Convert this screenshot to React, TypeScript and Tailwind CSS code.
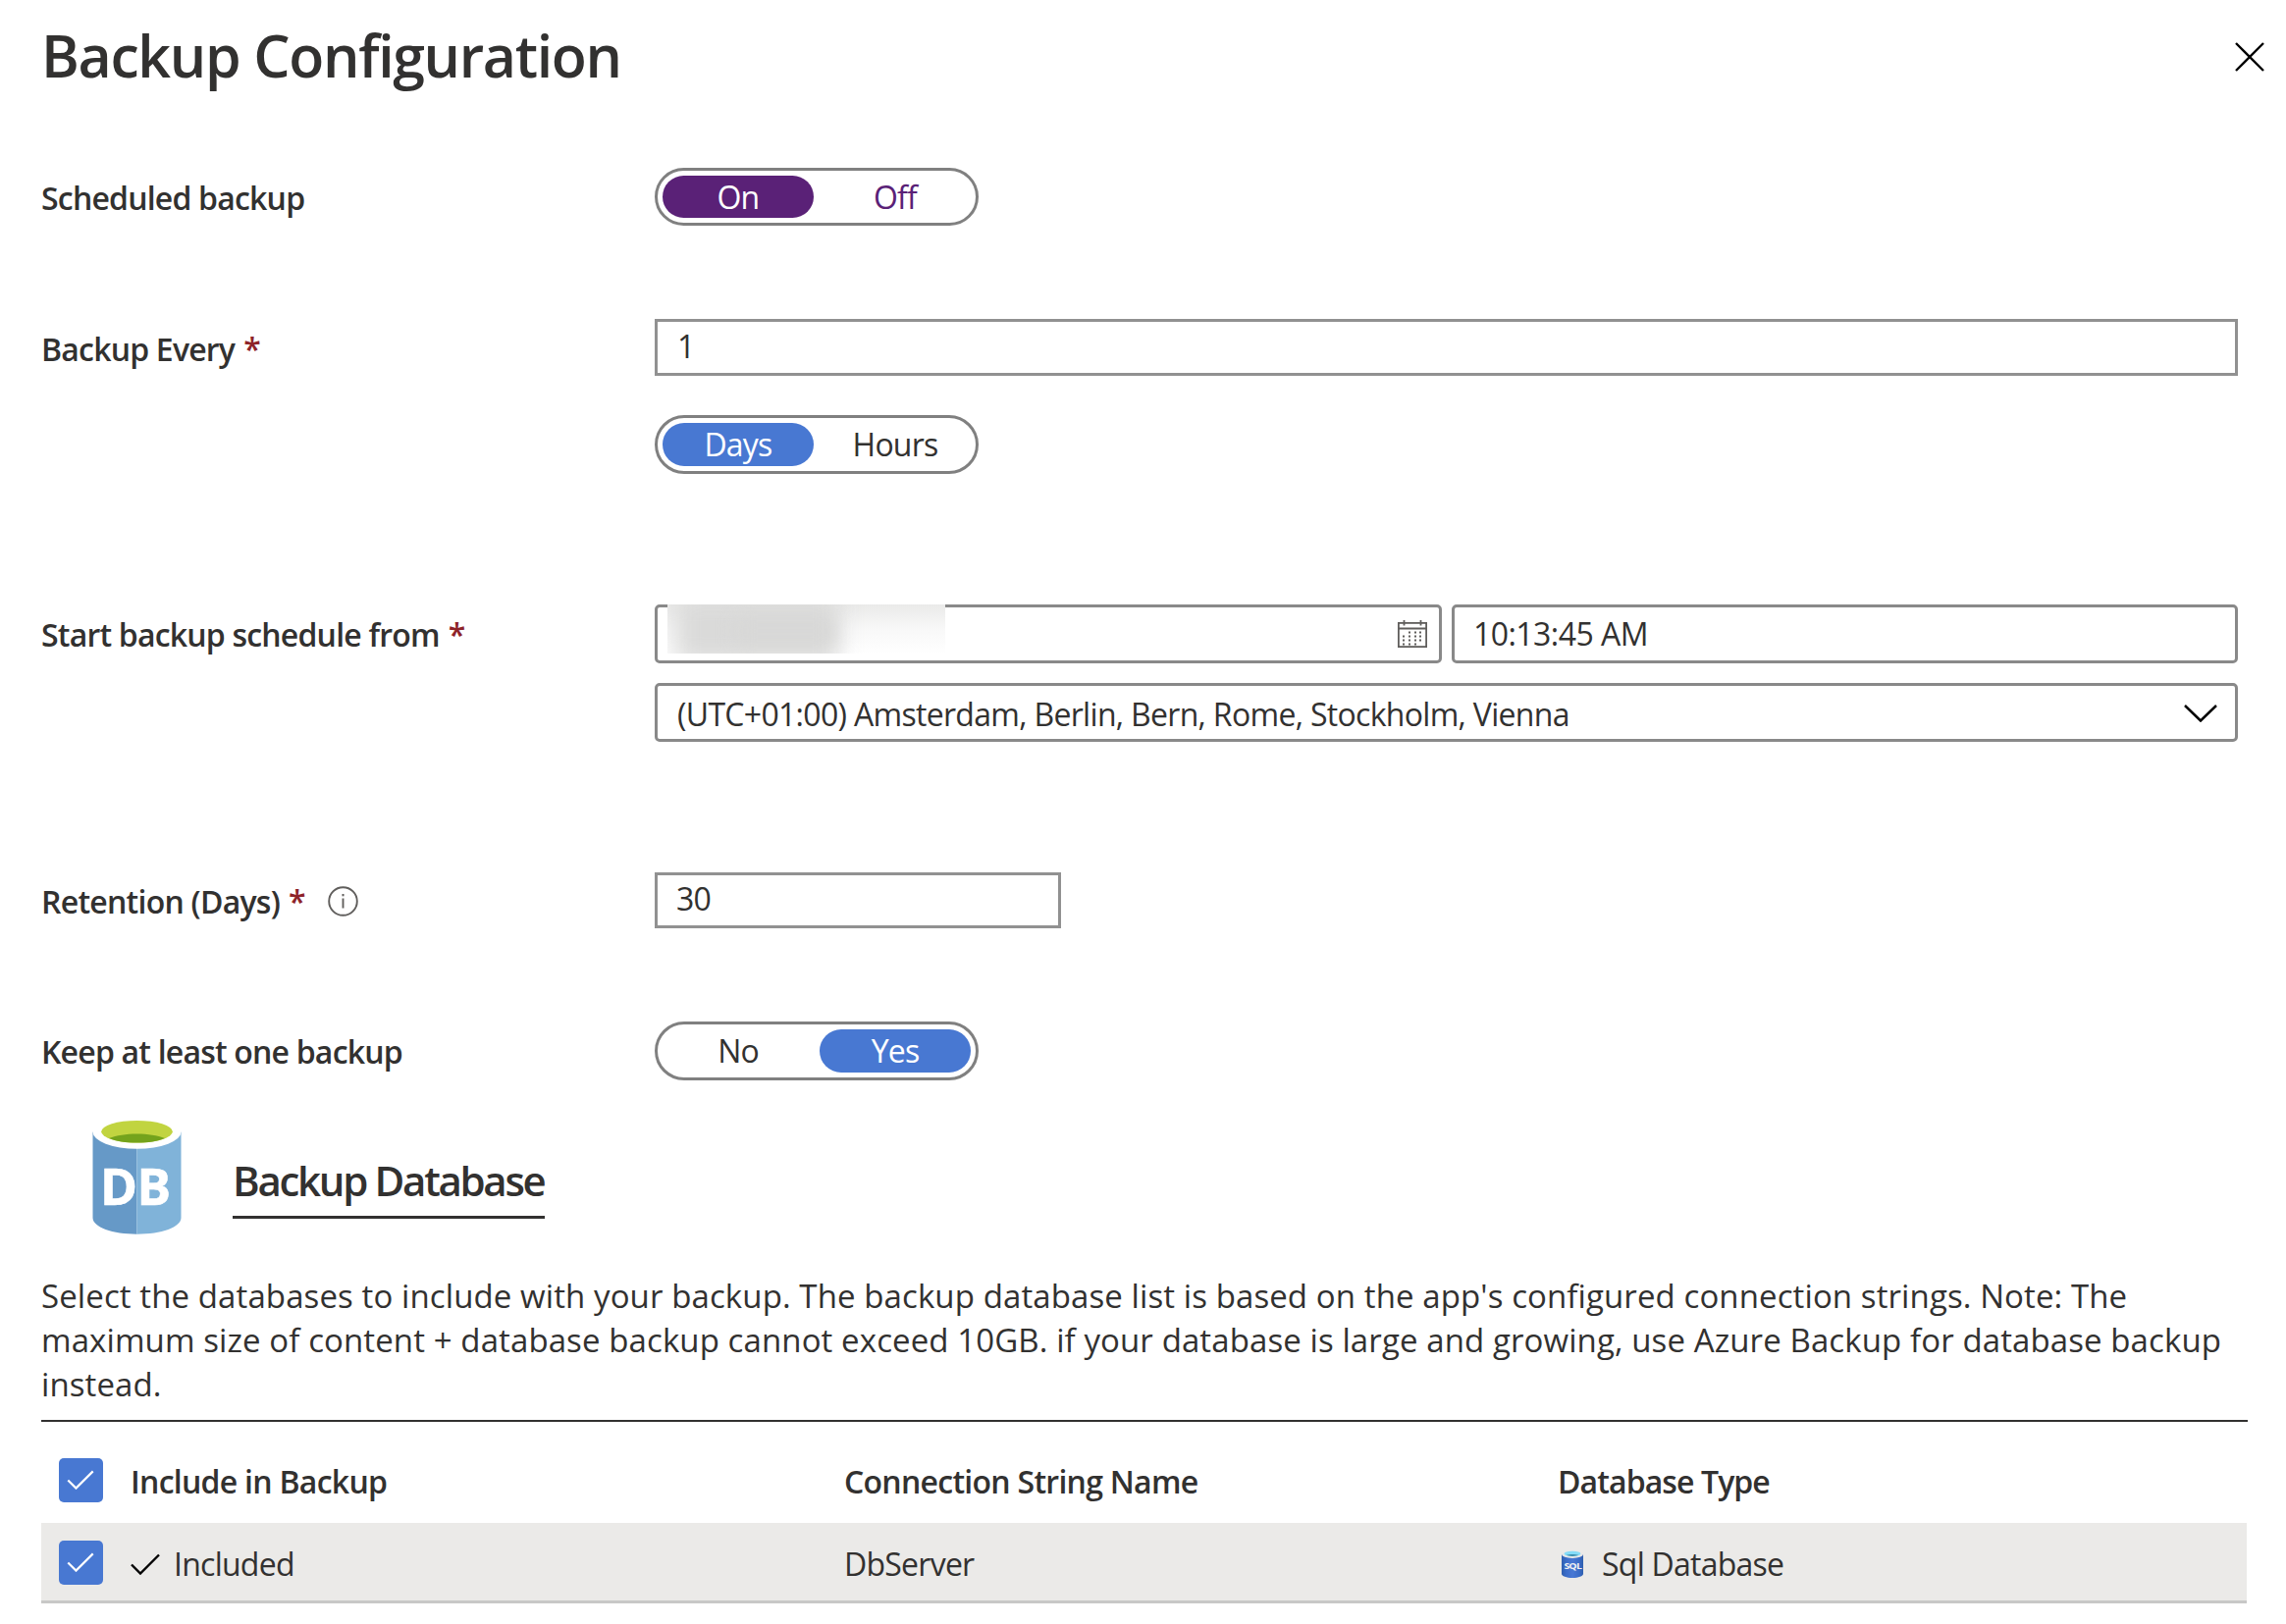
import type { ReactNode } from "react";

function Toggle({
  left,
  right,
  active,
  tone = "blue",
  size = "h-[60px]",
}: {
  left: string;
  right: string;
  active: "left" | "right";
  tone?: "blue" | "purple";
  size?: string;
}) {
  const on = tone === "purple" ? "bg-[#5a2177] text-white" : "bg-[#4878d2] text-white";
  const off = tone === "purple" ? "text-[#5a2177]" : "text-[#323130]";
  const cell = "flex h-full w-[154px] items-center justify-center rounded-[22px] tracking-[-0.8px]";
  return (
    <div className={`flex w-[330px] gap-[6px] rounded-[30px] border-[3px] border-[#808080] p-[5px] ${size}`}>
      <div className={`${cell} ${active === "left" ? on : off}`}>{left}</div>
      <div className={`${cell} ${active === "right" ? on : off}`}>{right}</div>
    </div>
  );
}

function Label({ children, required, leading }: { children: ReactNode; required?: boolean; leading: string }) {
  return (
    <div className={`w-[625px] shrink-0 font-semibold whitespace-pre tracking-[-0.8px] ${leading}`}>
      {children}
      {required && <span className="ml-[9px] text-[#8e2329]">*</span>}
    </div>
  );
}

function Tick({ className }: { className: string }) {
  return (
    <svg viewBox="0 0 30 22" className={className} fill="none" stroke="currentColor">
      <path d="M1 11.5 L10 20.5 L29 1.5" strokeWidth="2.4" />
    </svg>
  );
}

function Checkbox() {
  return (
    <div className="flex h-[45px] w-[45px] shrink-0 items-center justify-center rounded-[5px] bg-[#4878d2] pr-[2px] pb-[2px] text-white">
      <Tick className="h-[20px] w-[28px]" />
    </div>
  );
}

function CloseIcon() {
  return (
    <svg viewBox="0 0 30 30" className="mt-[43px] h-[30px] w-[30px]" stroke="#000" strokeWidth="2.4" fill="none">
      <path d="M1 1 L29 29 M29 1 L1 29" />
    </svg>
  );
}

function InfoIcon() {
  return (
    <svg viewBox="0 0 31 31" className="h-[31px] w-[31px]" fill="none" stroke="#605e5c">
      <circle cx="15.5" cy="15.5" r="14.3" strokeWidth="1.9" />
      <path d="M15.5 12.5 V22.5" strokeWidth="1.9" />
      <path d="M15.5 8 V10.3" strokeWidth="2" />
    </svg>
  );
}

const calendarDots = [
  [11, 12], [17, 12], [22, 12],
  [5, 16], [11, 16], [17, 16], [22, 16],
  [5, 20], [11, 20], [17, 20], [22, 20],
  [5, 24], [11, 24], [17, 24],
];

function CalendarIcon() {
  return (
    <svg viewBox="0 0 30 28" className="h-[28px] w-[30px]" fill="none" stroke="#605e5c" strokeWidth="1.8">
      <rect x="0.9" y="2.9" width="28.2" height="24.2" />
      <path d="M0 8.5 H30 M6.5 0 V5.5 M23.5 0 V5.5" />
      {calendarDots.map(([x, y]) => (
        <rect key={`${x}-${y}`} x={x} y={y - 0.5} width="2" height="2" fill="#605e5c" stroke="none" />
      ))}
    </svg>
  );
}

function ChevronIcon() {
  return (
    <svg viewBox="0 0 34 18" className="mt-[1px] h-[18px] w-[34px]" fill="none" stroke="#000" strokeWidth="2.5">
      <path d="M1 1 L17 16.5 L33 1" />
    </svg>
  );
}

function DatabaseIcon() {
  return (
    <svg viewBox="0 0 91 116" className="ml-[52px] h-[116px] w-[91px] shrink-0">
      <path d="M0.5 11.5 V99 C0.5 108.5 20.5 115.7 45.5 115.7 V11.5 Z" fill="#6699c7" />
      <path d="M45.5 11.5 V115.7 C70.5 115.7 90.5 108.5 90.5 99 V11.5 Z" fill="#80b3d9" />
      <ellipse cx="45.5" cy="11.5" rx="45" ry="17.2" fill="#fff" />
      <ellipse cx="45.5" cy="11.3" rx="36.3" ry="11.3" fill="#c1d440" />
      <path d="M17 18 C25 15 34 13.5 45.5 13.5 C57 13.5 66 15 74 18 C67 21 57 22.6 45.5 22.6 C34 22.6 24 21 17 18 Z" fill="#74a31c" />
      <text x="8" y="85.6" fontSize="51.5" fontWeight="700" fill="#fff" stroke="#fff" strokeWidth="0.6">
        <tspan>D</tspan>
        <tspan x="45.6">B</tspan>
      </text>
    </svg>
  );
}

function SqlIcon() {
  return (
    <svg viewBox="0 0 22 28" className="h-[28px] w-[22px]">
      <defs>
        <linearGradient id="sql-body" x1="0" x2="1" y1="0" y2="0">
          <stop offset="0" stopColor="#2f5fae" />
          <stop offset="0.2" stopColor="#3a6cc8" />
          <stop offset="0.5" stopColor="#4878d4" />
          <stop offset="0.8" stopColor="#3a6cc8" />
          <stop offset="1" stopColor="#2f5fae" />
        </linearGradient>
      </defs>
      <path d="M0 4 V24 C0 26.2 5 28 11 28 C17 28 22 26.2 22 24 V4 Z" fill="url(#sql-body)" />
      <ellipse cx="11" cy="4" rx="11" ry="3.9" fill="#e8e8e8" />
      <ellipse cx="11" cy="3.4" rx="8.4" ry="2.6" fill="#84dcf8" />
      <path d="M4.8 4.8 C8 3.7 14 3.7 17.2 4.8 C14 6.3 8 6.3 4.8 4.8 Z" fill="#3f8fae" />
      <text x="2.4" y="19.2" textLength="17.6" lengthAdjust="spacingAndGlyphs" fontSize="9.6" fontWeight="700" fill="#f2f2f2">
        SQL
      </text>
    </svg>
  );
}

export default function App() {
  return (
    <div className="h-[1655px] w-[2329px] overflow-hidden bg-white pl-[42px] font-['Open_Sans','Noto_Sans',sans-serif] text-[32px] text-[#323130]">
      <header className="flex h-[171px] justify-between pr-[22px]">
        <h1 className="pt-px text-[59px] leading-[110px] font-semibold tracking-[-1.35px]">Backup Configuration</h1>
        <CloseIcon />
      </header>

      <section className="flex">
        <Label leading="leading-[61px]">Scheduled backup</Label>
        <Toggle left="On" right="Off" active="left" tone="purple" size="h-[59px]" />
      </section>

      <section className="mt-[93px] flex">
        <Label leading="leading-[62px]" required>Backup Every</Label>
        <div className="flex flex-col gap-[40px]">
          <div className="flex h-[58px] w-[1613px] items-center border-[3px] border-[#919191] pb-[2px] pl-[20px]">1</div>
          <Toggle left="Days" right="Hours" active="left" />
        </div>
      </section>

      <section className="mt-[133px] flex">
        <Label leading="leading-[61px]" required>Start backup schedule from</Label>
        <div className="flex w-[1613px] flex-col gap-[20px]">
          <div className="flex gap-[10px]">
            <div className="relative flex h-[60px] w-[802px] items-center justify-end rounded-[5px] border-[3px] border-[#898989] pr-[12px]">
              <div className="absolute -top-[3px] left-[10px] h-[50px] w-[283px] overflow-hidden bg-white">
                <div className="h-full w-full bg-linear-to-b from-[#eaeae9] via-[#f8f8f8] to-white" />
                <div className="absolute -top-[10px] left-[8px] h-[70px] w-[166px] bg-[#dadad9] blur-[12px]" />
                <div className="absolute top-[14px] left-[70px] h-[26px] w-[100px] bg-[#d8d8d7] blur-[9px]" />
              </div>
              <CalendarIcon />
            </div>
            <div className="flex h-[60px] w-[801px] items-center rounded-[5px] border-[3px] border-[#898989] pl-[19px] tracking-[-0.55px]">
              10:13:45 AM
            </div>
          </div>
          <div className="flex h-[60px] items-center justify-between rounded-[5px] border-[3px] border-[#898989] pr-[18px] pl-[20px]">
            <span className="pt-[3px] tracking-[-0.69px]">(UTC+01:00) Amsterdam, Berlin, Bern, Rome, Stockholm, Vienna</span>
            <ChevronIcon />
          </div>
        </div>
      </section>

      <section className="mt-[133px] flex">
        <div className="flex w-[625px] items-center">
          <div className="leading-[59px] font-semibold tracking-[-0.75px]">
            Retention (Days)<span className="ml-[9px] text-[#8e2329]">*</span>
          </div>
          <div className="ml-[23px]">
            <InfoIcon />
          </div>
        </div>
        <div className="flex h-[57px] w-[414px] items-center border-[3px] border-[#919191] pb-[4px] pl-[19px] tracking-[-0.7px]">30</div>
      </section>

      <section className="mt-[93px] flex">
        <Label leading="leading-[61px]">Keep at least one backup</Label>
        <Toggle left="No" right="Yes" active="right" />
      </section>

      <section className="mt-[40px] flex items-start gap-[52px]">
        <DatabaseIcon />
        <h2 className="mt-[25px] w-[318px] border-b-[3px] border-[#323130] text-[42px] leading-[72px] font-semibold tracking-[-2.3px] whitespace-nowrap">
          Backup Database
        </h2>
      </section>

      <p className="mt-[40px] text-[33px] leading-[45px] tracking-[0.1px] whitespace-nowrap">
        Select the databases to include with your backup. The backup database list is based on the app's configured connection strings. Note: The
        <br />
        maximum size of content + database backup cannot exceed 10GB. if your database is large and growing, use Azure Backup for database backup
        <br />
        instead.
      </p>

      <div className="mt-[14px] h-[2px] w-[2248px] bg-[#323130]" />

      <div className="flex h-[103px] w-[2247px] pt-[37px] pl-[18px] leading-[48px] font-semibold tracking-[-0.73px]">
        <Checkbox />
        <div className="ml-[28px] w-[727px]">Include in Backup</div>
        <div className="w-[727px]">Connection String Name</div>
        <div className="tracking-[-0.9px]">Database Type</div>
      </div>

      <div className="flex h-[82px] w-[2247px] items-start border-b-[3px] border-[#c8c8c7] bg-[#ebeae8] pt-[18px] pl-[18px] leading-[48px] tracking-[-0.75px]">
        <Checkbox />
        <div className="ml-[28px] flex w-[727px] items-center">
          <Tick className="mr-[14px] h-[22px] w-[30px] text-black" />
          Included
        </div>
        <div className="w-[727px]">DbServer</div>
        <div className="flex items-center">
          <span className="mr-[19px] ml-[4px]">
            <SqlIcon />
          </span>
          Sql Database
        </div>
      </div>
    </div>
  );
}
